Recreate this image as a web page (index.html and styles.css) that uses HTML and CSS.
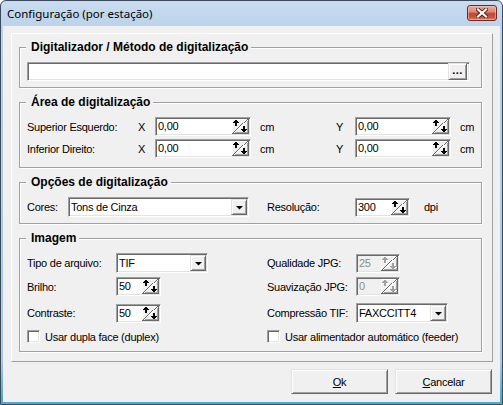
FILE: index.html
```html
<!DOCTYPE html>
<html lang="pt-BR">
<head>
<meta charset="utf-8">
<title>Configuração (por estação)</title>
<link rel="stylesheet" href="styles.css">
</head>
<body>
<svg class="defs" width="0" height="0" aria-hidden="true">
  <symbol id="spin" viewBox="0 0 17 15">
    <rect width="17" height="15" fill="#f0f0f0"/>
    <rect x="0" y="0" width="16" height="1" fill="#fff"/>
    <rect x="0" y="0" width="1" height="14" fill="#fff"/>
    <rect x="0" y="14" width="17" height="1" fill="#696969"/>
    <rect x="16" y="0" width="1" height="15" fill="#696969"/>
    <rect x="1" y="13" width="15" height="1" fill="#a0a0a0"/>
    <rect x="15" y="1" width="1" height="13" fill="#a0a0a0"/>
    <path d="M1 14L16 0" stroke="#696969" stroke-width="1" shape-rendering="crispEdges"/>
    <path d="M2 14L16 1" stroke="#ffffff" stroke-width="1" shape-rendering="crispEdges"/>
    <g fill="#000" shape-rendering="crispEdges">
      <rect x="3" y="1" width="2" height="1"/>
      <rect x="2" y="2" width="4" height="1"/>
      <rect x="1" y="3" width="6" height="1"/>
      <rect x="3" y="4" width="2" height="3"/>
      <rect x="11" y="7" width="2" height="3"/>
      <rect x="9" y="10" width="6" height="1"/>
      <rect x="10" y="11" width="4" height="1"/>
      <rect x="11" y="12" width="2" height="1"/>
    </g>
  </symbol>
  <symbol id="spin-off" viewBox="0 0 17 15">
    <rect width="17" height="15" fill="#f0f0f0"/>
    <rect x="0" y="0" width="16" height="1" fill="#fff"/>
    <rect x="0" y="0" width="1" height="14" fill="#fff"/>
    <rect x="0" y="14" width="17" height="1" fill="#696969"/>
    <rect x="16" y="0" width="1" height="15" fill="#696969"/>
    <rect x="1" y="13" width="15" height="1" fill="#a0a0a0"/>
    <rect x="15" y="1" width="1" height="13" fill="#a0a0a0"/>
    <path d="M1 14L16 0" stroke="#696969" stroke-width="1" shape-rendering="crispEdges"/>
    <path d="M2 14L16 1" stroke="#ffffff" stroke-width="1" shape-rendering="crispEdges"/>
    <g fill="#fff" shape-rendering="crispEdges" transform="translate(1 1)">
      <rect x="3" y="1" width="2" height="1"/>
      <rect x="2" y="2" width="4" height="1"/>
      <rect x="1" y="3" width="6" height="1"/>
      <rect x="3" y="4" width="2" height="3"/>
      <rect x="11" y="7" width="2" height="3"/>
      <rect x="9" y="10" width="6" height="1"/>
      <rect x="10" y="11" width="4" height="1"/>
    </g>
    <g fill="#a0a0a0" shape-rendering="crispEdges">
      <rect x="3" y="1" width="2" height="1"/>
      <rect x="2" y="2" width="4" height="1"/>
      <rect x="1" y="3" width="6" height="1"/>
      <rect x="3" y="4" width="2" height="3"/>
      <rect x="11" y="7" width="2" height="3"/>
      <rect x="9" y="10" width="6" height="1"/>
      <rect x="10" y="11" width="4" height="1"/>
      <rect x="11" y="12" width="2" height="1"/>
    </g>
  </symbol>
  <symbol id="drop" viewBox="0 0 7 4">
    <path d="M0 0H7L3.5 3.5Z" fill="#000"/>
  </symbol>
</svg>

<div class="window">
  <div class="titlebar">
    <span class="title">Configuração (por estação)</span>
    <span class="close" aria-label="Fechar">
      <svg width="12" height="10" viewBox="0 0 12 10">
        <path d="M2 1.5L10 8.5M10 1.5L2 8.5" stroke="#5b1d14" stroke-width="4" stroke-linecap="square"/>
        <path d="M2 1.5L10 8.5M10 1.5L2 8.5" stroke="#ffffff" stroke-width="2.2" stroke-linecap="square"/>
      </svg>
    </span>
  </div>

  <div class="client">
    <div class="panel">
      <fieldset class="group g1">
        <legend>Digitalizador / Método de digitalização</legend>
        <div class="edit scanner">
          <span class="val"></span>
          <span class="dots">...</span>
        </div>
      </fieldset>

      <fieldset class="group g2">
        <legend>Área de digitalização</legend>
        <div class="coords">
          <span>Superior Esquerdo:</span>
          <span>X</span>
          <div class="edit"><span class="val">0,00</span><svg class="spin"><use href="#spin" width="17" height="15"/></svg></div>
          <span class="unit">cm</span>
          <span class="axis">Y</span>
          <div class="edit"><span class="val">0,00</span><svg class="spin"><use href="#spin" width="17" height="15"/></svg></div>
          <span class="unit">cm</span>

          <span>Inferior Direito:</span>
          <span>X</span>
          <div class="edit"><span class="val">0,00</span><svg class="spin"><use href="#spin" width="17" height="15"/></svg></div>
          <span class="unit">cm</span>
          <span class="axis">Y</span>
          <div class="edit"><span class="val">0,00</span><svg class="spin"><use href="#spin" width="17" height="15"/></svg></div>
          <span class="unit">cm</span>
        </div>
      </fieldset>

      <fieldset class="group g3">
        <legend>Opções de digitalização</legend>
        <div class="opts">
          <span>Cores:</span>
          <div class="combo"><span class="val">Tons de Cinza</span><span class="dd"><svg width="7" height="4"><use href="#drop" width="7" height="4"/></svg></span></div>
          <span></span>
          <span>Resolução:</span>
          <div class="edit"><span class="val">300</span><svg class="spin"><use href="#spin" width="17" height="15"/></svg></div>
          <span class="dpi">dpi</span>
        </div>
      </fieldset>

      <fieldset class="group g4">
        <legend>Imagem</legend>
        <div class="irow r1">
          <span>Tipo de arquivo:</span>
          <div><div class="combo w92"><span class="val">TIF</span><span class="dd"><svg width="7" height="4"><use href="#drop" width="7" height="4"/></svg></span></div></div>
          <span>Qualidade JPG:</span>
          <div><div class="edit w44 off"><span class="val">25</span><svg class="spin"><use href="#spin-off" width="17" height="15"/></svg></div></div>
        </div>
        <div class="irow r2">
          <span>Brilho:</span>
          <div><div class="edit w45"><span class="val">50</span><svg class="spin"><use href="#spin" width="17" height="15"/></svg></div></div>
          <span>Suavização JPG:</span>
          <div><div class="edit w44 off"><span class="val">0</span><svg class="spin"><use href="#spin-off" width="17" height="15"/></svg></div></div>
        </div>
        <div class="irow r3">
          <span>Contraste:</span>
          <div><div class="edit w45"><span class="val">50</span><svg class="spin"><use href="#spin" width="17" height="15"/></svg></div></div>
          <span>Compressão TIF:</span>
          <div><div class="combo w92"><span class="val">FAXCCITT4</span><span class="dd"><svg width="7" height="4"><use href="#drop" width="7" height="4"/></svg></span></div></div>
        </div>
        <div class="crow">
          <label class="chk"><span class="box"></span><span>Usar dupla face (duplex)</span></label>
          <label class="chk"><span class="box"></span><span>Usar alimentador automático (feeder)</span></label>
        </div>
      </fieldset>
    </div>

    <div class="buttons">
      <button class="btn" type="button"><u>O</u>k</button>
      <button class="btn" type="button"><u>C</u>ancelar</button>
    </div>
  </div>
</div>
</body>
</html>
```

FILE: styles.css
```css
* { box-sizing: border-box; }

html, body {
  margin: 0;
  padding: 0;
  background: #ffffff;
}

body {
  width: 503px;
  height: 405px;
  overflow: hidden;
  font-family: "Liberation Sans", Arial, sans-serif;
  font-size: 11px;
  color: #000;
  letter-spacing: -0.25px;
}

.defs {
  position: absolute;
  width: 0;
  height: 0;
  overflow: hidden;
}

/* ---------- window frame ---------- */
.window {
  width: 503px;
  height: 405px;
  border: 1px solid #3d4a5c;
  border-radius: 6px 6px 0 0;
  padding: 0 2px 2px 2px;
  display: flex;
  flex-direction: column;
  background: linear-gradient(to bottom, #cadcf0 0, #bcd3eb 24px, #b6cee8 80px, #a6c9ea 360px, #4aaadc 398px);
}

.titlebar {
  height: 25px;
  flex: none;
  display: flex;
  align-items: flex-start;
  padding: 0 3px 0 4px;
}

.title {
  font-family: "Noto Sans", "Open Sans", sans-serif;
  font-size: 11.5px;
  letter-spacing: 0;
  line-height: 16px;
  margin-top: 5px;
  color: #000;
}

.close {
  margin-left: auto;
  margin-top: 4px;
  width: 30px;
  height: 16px;
  border: 1px solid #6b2a21;
  border-radius: 3px;
  background: linear-gradient(to bottom, #e9a999 0, #dd8a77 40%, #c6452f 55%, #c65640 80%, #d7826c 100%);
  box-shadow: inset 0 0 0 1px rgba(255, 220, 210, 0.45);
  display: flex;
  align-items: center;
  justify-content: center;
}

.close svg { display: block; }

/* ---------- client ---------- */
.client {
  flex: 1;
  background: #f0f0f0;
  padding: 7px 7px 0 8px;
  display: flex;
  flex-direction: column;
}

.panel {
  border: 1px solid;
  border-color: #ffffff #a0a0a0 #a0a0a0 #ffffff;
  padding: 6px 10px 9px 7px;
  display: flex;
  flex-direction: column;
  gap: 7px;
}

.group {
  margin: 0;
  min-width: 0;
  border: 1px solid #a0a0a0;
  box-shadow: inset 1px 1px 0 #ffffff, 1px 1px 0 #ffffff;
  padding: 7px 11px 6px 7px;
}

.group legend {
  font-weight: bold;
  font-size: 12px;
  line-height: 15px;
  letter-spacing: 0;
  padding: 0 3px 0 5px;
  margin-left: -1px;
  color: #000;
  background: #f0f0f0;
}

.g2 { padding-bottom: 9px; }
.g4 { padding-bottom: 8px; }

/* ---------- controls ---------- */
.edit,
.combo {
  display: flex;
  align-items: center;
  background: #ffffff;
  border: 1px solid;
  border-color: #a0a0a0 #ffffff #ffffff #a0a0a0;
  box-shadow: inset 1px 1px 0 #696969, inset -1px -1px 0 #e3e3e3;
  padding: 0 1px 0 2px;
  white-space: nowrap;
}

.edit { height: 19px; }
.combo { height: 20px; }

.val { flex: 1; line-height: 13px; }

.spin {
  width: 17px;
  height: 15px;
  flex: none;
  display: block;
}

.edit.off { background: #f0f0f0; }
.edit.off .val { color: #8d8d8d; }

.dd {
  width: 16px;
  height: 16px;
  flex: none;
  background: #f0f0f0;
  border: 1px solid;
  border-color: #e3e3e3 #696969 #696969 #e3e3e3;
  box-shadow: inset 1px 1px 0 #ffffff, inset -1px -1px 0 #a0a0a0;
  display: flex;
  align-items: center;
  justify-content: center;
  padding-top: 1px;
}

.dd svg { display: block; }

.scanner { width: 443px; padding-right: 1px; }

.dots {
  width: 19px;
  height: 17px;
  flex: none;
  background: #f0f0f0;
  border: 1px solid;
  border-color: #e3e3e3 #696969 #696969 #e3e3e3;
  box-shadow: inset 1px 1px 0 #ffffff, inset -1px -1px 0 #a0a0a0;
  font-weight: bold;
  letter-spacing: 0.5px;
  line-height: 12px;
  text-align: center;
  margin-right: 1px;
}

/* ---------- layouts ---------- */
.coords {
  display: grid;
  grid-template-columns: 111px 17px 96px 82px 22px 96px auto;
  grid-auto-rows: 19px;
  row-gap: 3px;
  align-items: center;
}

.unit { padding-left: 9px; }
.axis { padding-left: 3px; }

.opts {
  display: grid;
  grid-template-columns: 41px 181px 18px 88px 55px auto;
  height: 20px;
  align-items: center;
}

.dpi { padding-left: 14px; }

.irow {
  display: grid;
  grid-template-columns: 89px 151px 89px auto;
  align-items: center;
}

.r1 { height: 20px; }
.r2 { height: 19px; margin-top: 4px; }
.r3 { height: 20px; margin-top: 7px; }

.w92 { width: 92px; }
.w45 { width: 45px; }
.w44 { width: 44px; }

.crow {
  display: grid;
  grid-template-columns: 240px auto;
  height: 13px;
  margin-top: 7px;
  align-items: center;
}

.chk {
  display: flex;
  align-items: center;
  gap: 5px;
}

.box {
  width: 13px;
  height: 13px;
  flex: none;
  background: #ffffff;
  border: 1px solid;
  border-color: #a0a0a0 #ffffff #ffffff #a0a0a0;
  box-shadow: inset 1px 1px 0 #696969, inset -1px -1px 0 #e3e3e3;
}

/* ---------- buttons ---------- */
.buttons {
  display: flex;
  justify-content: flex-end;
  gap: 7px;
  margin-top: 7px;
  margin-right: 1px;
}

.btn {
  width: 97px;
  height: 25px;
  margin: 0;
  padding: 0;
  font-family: "Liberation Sans", Arial, sans-serif;
  font-size: 11px;
  letter-spacing: -0.25px;
  color: #000;
  background: #f0f0f0;
  border: 1px solid;
  border-color: #e3e3e3 #696969 #696969 #e3e3e3;
  box-shadow: inset 1px 1px 0 #ffffff, inset -1px -1px 0 #a0a0a0;
  border-radius: 0;
}
```
